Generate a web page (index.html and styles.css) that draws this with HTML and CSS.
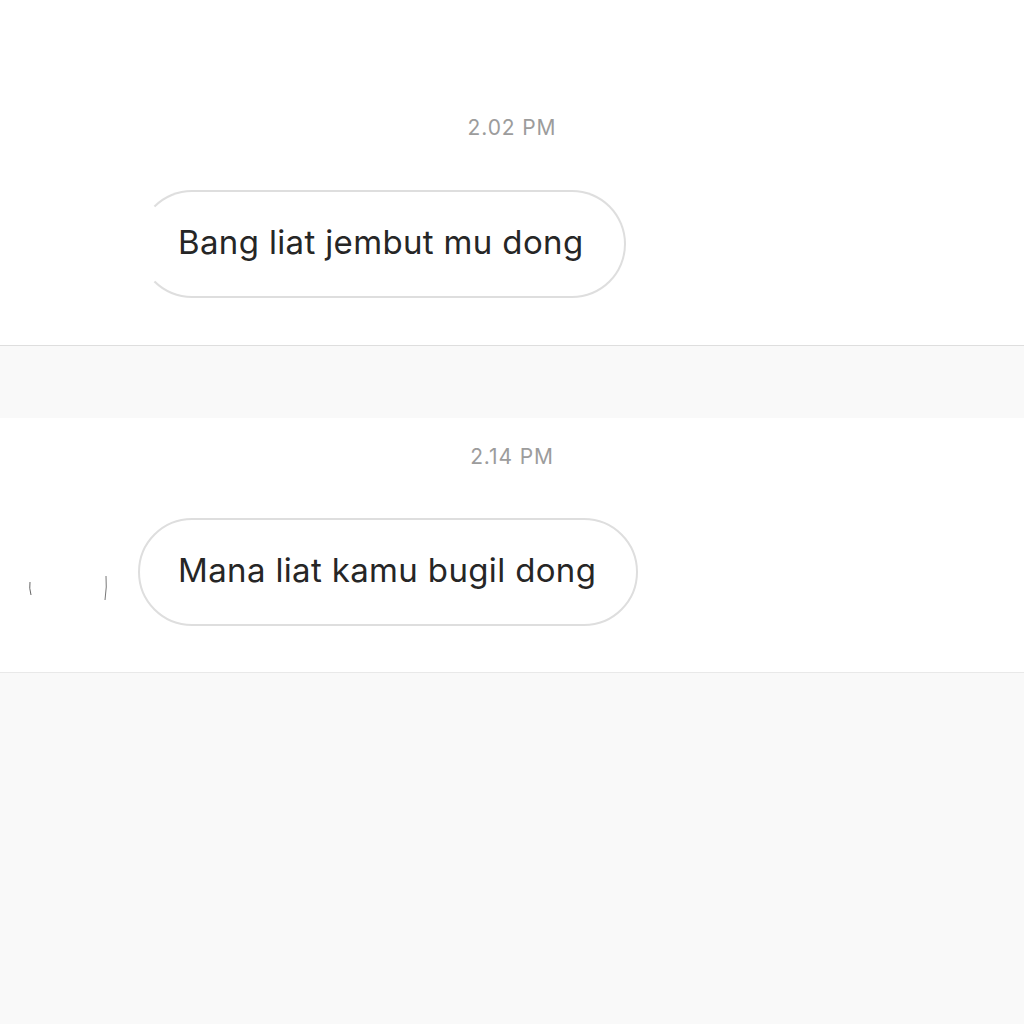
FILE: index.html
```html
<!DOCTYPE html>
<html lang="id">
<head>
    <meta charset="UTF-8">
    <meta name="viewport" content="width=device-width, initial-scale=1.0">
    <title>Pesan</title>
    <link rel="stylesheet" href="styles.css">
</head>
<body>
    <section class="grupo grupo-pertama">
        <p class="waktu">2.02 PM</p>
        <div class="baris">
            <div class="avatar"></div>
            <div class="gelembung gelembung-terpotong">Bang liat jembut mu dong</div>
        </div>
    </section>

    <section class="grupo grupo-kedua">
        <p class="waktu">2.14 PM</p>
        <div class="baris">
            <div class="avatar">
                <!-- sisa pinggiran foto profil -->
                <svg width="90" height="108" viewBox="0 0 90 108">
                    <path d="M10 64 Q9 70 11 77" stroke="#666" stroke-width="1" fill="none"/>
                    <path d="M86 58 Q87 68 85 82" stroke="#777" stroke-width="1" fill="none"/>
                </svg>
            </div>
            <div class="gelembung">Mana liat kamu bugil dong</div>
        </div>
    </section>
</body>
</html>
```

FILE: styles.css
```css
body {
    margin: 0;
    padding: 0;
    background-color: #f9f9f9;
    font-family: "Inter", "Liberation Sans", sans-serif;
}

.grupo {
    background-color: #fff;
    border-bottom: 1px solid #dedede;
}

.grupo-pertama {
    padding: 116px 0 47px;
}

.grupo-kedua {
    margin-top: 72px;
    padding: 27px 0 46px;
    border-bottom-color: #e9e9e9;
}

.waktu {
    margin: 0;
    height: 24px;
    line-height: 24px;
    text-align: center;
    font-size: 21px;
    letter-spacing: 0.9px;
    color: #9c9c9c;
}

.grupo-pertama .waktu {
    margin-bottom: 50px;
}

.grupo-kedua .waktu {
    margin-bottom: 49px;
}

.baris {
    display: flex;
    align-items: center;
    padding-left: 20px;
    gap: 28px;
}

.avatar {
    width: 90px;
    height: 108px;
    flex: none;
}

.gelembung {
    box-sizing: border-box;
    height: 108px;
    line-height: 100px;
    padding: 0 40px 0 38px;
    border: 2px solid #dedede;
    border-radius: 54px;
    background-color: #fff;
    font-size: 33px;
    letter-spacing: 0.35px;
    color: #262626;
    white-space: nowrap;
}

.gelembung-terpotong {
    border-left-color: transparent;
}
```
